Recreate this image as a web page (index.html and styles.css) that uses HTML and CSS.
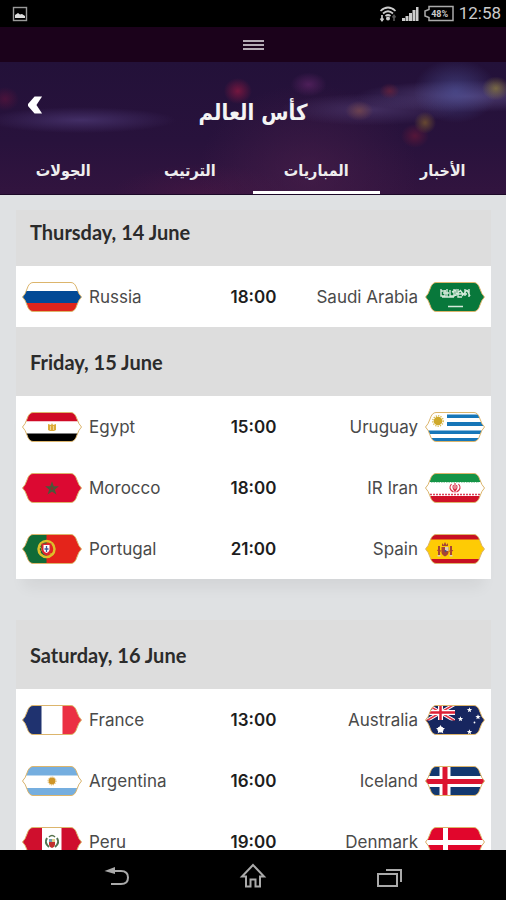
FILE: index.html
```html
<!DOCTYPE html>
<html lang="en">
<head>
  <meta charset="UTF-8" />
  <meta name="viewport" content="width=device-width, initial-scale=1.0"/>
  <title>كأس العالم</title>
  <link rel="stylesheet" href="styles.css">
</head>
<body>

<svg class="defs" aria-hidden="true">
  <defs>
    <path id="badge" d="M10 .5H48Q52 .5 54 7Q55.500 12 58.500 15Q55.500 18 54 23Q52 29.500 48 29.500H10Q6 29.500 4 23Q2.500 18-.5 15Q2.500 12 4 7Q6 .5 10 .5Z"/>
    <clipPath id="clip"><use href="#badge"/></clipPath>
    <path id="star" d="M0-4L1-1.3L3.8-1.2L1.5.6L2.4 3.3L0 1.7L-2.4 3.3L-1.5.6L-3.8-1.2L-1-1.3Z"/>
  </defs>
</svg>

<div class="phone">
  <div class="status">
    <svg class="picture" viewBox="0 0 16 16">
      <rect x="1.5" y="1.5" width="13" height="13" fill="none" stroke="#999" stroke-width="1.4"/>
      <path d="M3 12V9l3-2 2 1.500 2-.5 3 2v2z" fill="#ddd"/>
    </svg>
    <svg class="wifi" viewBox="0 0 18 18" fill="none" stroke="#ccc" stroke-width="1.7">
      <path d="M1.500 6Q9-1 16.500 6M4 8.500Q9 4 14 8.500M6.500 11Q9 9 11.500 11"/>
      <circle cx="9" cy="13.500" r="2" fill="#ccc" stroke="none"/>
      <path d="M3 10v5M1.500 13.500L3 15.500 4.500 13.500"/>
      <path d="M15 16v-5M13.500 12.500L15 10.500 16.500 12.500" stroke="#555"/>
    </svg>
    <svg class="signal" viewBox="0 0 18 18" fill="#ccc">
      <path d="M1 13h3v3H1zM4.500 11h3v5h-3zM8 8h3v8H8zM11.500 5h3v11h-3zM15 2h2.500v14H15z"/>
    </svg>
    <div class="battery">
      <svg viewBox="0 0 32 18" fill="none" stroke="#aaa" stroke-width="1.500"><path d="M6 1.500H30V15.500H6V12.500L2 11V6L6 4.500Z"/></svg>
      <span>48%</span>
    </div>
    <time class="clock">12:58</time>
  </div>

  <div class="menubar">
    <button class="menu" aria-label="Menu"><i></i><i></i><i></i></button>
  </div>

  <header class="hero">
    <div class="title">
      <button class="back" aria-label="Back">
        <svg viewBox="0 0 16 20"><path d="M7 1H15L9 10L15 19H7L0 11V9Z" fill="#fff"/></svg>
      </button>
      <h1 lang="ar" dir="rtl">كأس العالم</h1>
    </div>
    <nav class="tabs" lang="ar" dir="rtl">
      <a href="#">الأخبار</a>
      <a href="#" class="active">المباريات</a>
      <a href="#">الترتيب</a>
      <a href="#">الجولات</a>
    </nav>
  </header>

  <main>
    <section>
      <h2>Thursday, 14 June</h2>
      <ul class="card">
        <li>
          <div class="team">
            <svg class="flag" viewBox="0 0 58 30"><g clip-path="url(#clip)"><path fill="#fff" d="M0 0h58v9H0z"/><path fill="#034a96" d="M-1 9h60v12H-1z"/><path fill="#e0251b" d="M0 21h58v9H0z"/></g><use href="#badge" class="rim"/></svg>
            <span>Russia</span>
          </div>
          <time>18:00</time>
          <div class="team away">
            <span>Saudi Arabia</span>
            <svg class="flag" viewBox="0 0 58 30"><g clip-path="url(#clip)"><path fill="#08783b" d="M0 0h58v30H0z"/><g fill="none" stroke="#d5eadb" stroke-width="1.400"><path d="M15 7v7h4V8M17 11h6M21 7v8M24 8v6h4V7M26 10l4-2v6M32 7v8h4M34 8l3 4M39 7v7M41 8l3 6M43 7v8M16 15h12M31 12h10M15 9h5M28 14l6-5M36 14l5-6"/><path d="M22 24.500h15"/></g></g><use href="#badge" class="rim"/></svg>
          </div>
        </li>
      </ul>
    </section>

    <section>
      <h2>Friday, 15 June</h2>
      <ul class="card shadow">
        <li>
          <div class="team">
            <svg class="flag" viewBox="0 0 58 30"><g clip-path="url(#clip)"><path fill="#cf0a26" d="M0 0h58v9.500H0z"/><path fill="#fff" d="M0 9.500h58v12H0z"/><path fill="#000" d="M0 21.500h58V30H0z"/><path fill="#dcab38" d="M25 12l3 1 1-2 1 2 3-1v6l-2 1h-4l-2-1z"/><path stroke="#f4deb0" stroke-width=".8" d="M27.500 14v4M30.500 14v4"/></g><use href="#badge" class="rim"/></svg>
            <span>Egypt</span>
          </div>
          <time>15:00</time>
          <div class="team away">
            <span>Uruguay</span>
            <svg class="flag" viewBox="0 0 58 30"><g clip-path="url(#clip)"><path fill="#fff" d="M0 0h58v30H0z"/><path fill="#1676b8" d="M21 2.500h37V6H21zM21 10h37v4H21zM0 18.500h58v3.500H0zM0 26h58v3H0z"/><circle cx="12" cy="9" r="4.300" fill="#cfa92a"/><circle cx="12" cy="9" r="5.200" fill="none" stroke="#d8bb55" stroke-width="1.500" stroke-dasharray="1.200 1.200"/></g><use href="#badge" class="rim"/></svg>
          </div>
        </li>
        <li>
          <div class="team">
            <svg class="flag" viewBox="0 0 58 30"><g clip-path="url(#clip)"><path fill="#dc0932" d="M-1 0h60v30H-1z"/><use href="#star" fill="#8d2b2c" stroke="#47593a" stroke-width="1.400" transform="translate(29 15.500) scale(1.200)"/></g><use href="#badge" class="rim"/></svg>
            <span>Morocco</span>
          </div>
          <time>18:00</time>
          <div class="team away">
            <span>IR Iran</span>
            <svg class="flag" viewBox="0 0 58 30"><g clip-path="url(#clip)"><path fill="#fff" d="M0 0h58v30H0z"/><path fill="#159447" d="M0 0h58v9H0z"/><path fill="#d01027" d="M0 23h58v7H0z"/><path d="M5 9.500h48" stroke="#a9d8b9" stroke-dasharray="1.500 1"/><path d="M4 21.500h50" stroke="#dc4057" stroke-width="1.500" stroke-dasharray="2 1"/><path d="M25.500 11q-4 4.500 2 8M32.500 11q4 4.500-2 8M29 10v9.500M27.500 12q-1.500 3 1.500 6 3-3 1.500-6" fill="none" stroke="#d92b42" stroke-width="1.100"/></g><use href="#badge" class="rim"/></svg>
          </div>
        </li>
        <li>
          <div class="team">
            <svg class="flag" viewBox="0 0 58 30"><g clip-path="url(#clip)"><path fill="#e4241b" d="M0 0h59v30H0z"/><path fill="#106b37" d="M-1 0h24.500v30H-1z"/><circle cx="23.500" cy="15" r="8" fill="none" stroke="#dcc02b" stroke-width="2.500"/><path d="M16 12q7 9 15 8M16 19q8-11 15-8" fill="none" stroke="#dcc02b"/><path d="M18.500 9.500h10v7q-1 4-5 5-4-1-5-5z" fill="#dc2630"/><path d="M20.500 11h6v5q-1 3-3 3-2 0-3-3z" fill="#fff"/><path d="M23.500 12v6M21.500 15h4" stroke="#3b5996" stroke-width="1.300"/></g><use href="#badge" class="rim"/></svg>
            <span>Portugal</span>
          </div>
          <time>21:00</time>
          <div class="team away">
            <span>Spain</span>
            <svg class="flag" viewBox="0 0 58 30"><g clip-path="url(#clip)"><path fill="#fecb05" d="M0 0h58v30H0z"/><path fill="#c71022" d="M0 0h58v5.500H0zM0 25h58v5H0z"/><path fill="#a64535" d="M12 12h2v9h-2zM24 12h2v9h-2zM15.500 13h7v6q-1 3-3.500 3.500-2.500-.5-3.500-3.500zM16 9l1.500 2L19 8l1.500 3L22 9v3h-6z"/><path fill="#ddd0bb" d="M19 13h3.500v4H19zM11.500 21h3v1.500h-3zM23.500 21h3v1.500h-3z"/><circle cx="19.500" cy="17" r="1" fill="#3d518d"/><path d="M11 16q4 3 4 0M23 17q3 2 4-1" stroke="#b94835" fill="none"/></g><use href="#badge" class="rim"/></svg>
          </div>
        </li>
      </ul>
    </section>

    <section class="spaced">
      <h2>Saturday, 16 June</h2>
      <ul class="card">
        <li>
          <div class="team">
            <svg class="flag" viewBox="0 0 58 30"><g clip-path="url(#clip)"><path fill="#fff" d="M0 0h58v30H0z"/><path fill="#1f326f" d="M-1 0h19.500v30H-1z"/><path fill="#eb3043" d="M39.500 0H59v30H39.500z"/></g><use href="#badge" class="rim"/></svg>
            <span>France</span>
          </div>
          <time>13:00</time>
          <div class="team away">
            <span>Australia</span>
            <svg class="flag" viewBox="0 0 58 30"><g clip-path="url(#clip)"><path fill="#17265f" d="M0 0h58v30H0z"/><path d="M0-1L29 16M0 16L29-1" stroke="#fff" stroke-width="3.500"/><path d="M0-1L29 16M0 16L29-1" stroke="#e23445" stroke-width="1.500"/><path d="M14.500 0v15M0 7.500h29" stroke="#fff" stroke-width="5"/><path d="M14.500 0v15M0 7.500h29" stroke="#dd2036" stroke-width="2.500"/><path fill="#17265f" d="M0 15.500h31V30H0zM29 0h5v16h-5z"/><g fill="#fff"><use href="#star" transform="translate(14.500 24.500) scale(1.200)"/><circle cx="14.500" cy="24.500" r="3"/><use href="#star" transform="translate(43.500 5) scale(.7)"/><use href="#star" transform="translate(34.500 14) scale(.7)"/><use href="#star" transform="translate(52 12) scale(.7)"/><use href="#star" transform="translate(43.500 27) scale(.7)"/><circle cx="48.500" cy="17.500" r=".9"/></g></g><use href="#badge" class="rim"/></svg>
          </div>
        </li>
        <li>
          <div class="team">
            <svg class="flag" viewBox="0 0 58 30"><g clip-path="url(#clip)"><path fill="#75aedf" d="M0 0h58v30H0z"/><path fill="#fff" d="M0 9.500h58V22H0z"/><circle cx="29" cy="15" r="3.400" fill="#cf9528"/><circle cx="29" cy="15" r="4" fill="none" stroke="#dba947" stroke-dasharray="1 1"/></g><use href="#badge" class="rim"/></svg>
            <span>Argentina</span>
          </div>
          <time>16:00</time>
          <div class="team away">
            <span>Iceland</span>
            <svg class="flag" viewBox="0 0 58 30"><g clip-path="url(#clip)"><path fill="#13386f" d="M0 0h58v30H0z"/><path d="M19 0v30M0 15.500h58" stroke="#fff" stroke-width="11"/><path d="M19 0v30M-1 15.500h60" stroke="#dc1430" stroke-width="5"/></g><use href="#badge" class="rim"/></svg>
          </div>
        </li>
        <li>
          <div class="team">
            <svg class="flag" viewBox="0 0 58 30"><g clip-path="url(#clip)"><path fill="#cf0f2d" d="M-1 0h60v30H-1z"/><path fill="#fff" d="M19 0h19.500v30H19z"/><path d="M24 11q-3 5 2 9M34 11q3 5-2 9" fill="none" stroke="#507451" stroke-width="2"/><path fill="#c2302f" d="M26 15h6v3q-1 3-3 3-2 0-3-3z"/><path fill="#6c9db4" d="M26 12h3v3h-3z"/><path fill="#e2cf86" d="M29 12h3v3h-3z"/><path d="M26 10q3-3 6 0" fill="none" stroke="#56714b" stroke-width="1.500"/></g><use href="#badge" class="rim"/></svg>
            <span>Peru</span>
          </div>
          <time>19:00</time>
          <div class="team away">
            <span>Denmark</span>
            <svg class="flag" viewBox="0 0 58 30"><g clip-path="url(#clip)"><path fill="#e1062c" d="M0 0h58v30H0z"/><path d="M19.500 0v30M0 15.500h58" stroke="#fff" stroke-width="5"/></g><use href="#badge" class="rim"/></svg>
          </div>
        </li>
      </ul>
    </section>
  </main>

  <footer class="softkeys">
    <button aria-label="Go back"><svg viewBox="0 0 28 28"><path d="M7 9H18Q25 9 25 15.500T18 22H8" /><path d="M1.500 9L12 5V12Z" class="solid"/></svg></button>
    <button aria-label="Home"><svg viewBox="0 0 28 28"><path d="M14 3L3 14.500H7V24.500H11.500V17.500H16.500V24.500H21V14.500H25Z"/></svg></button>
    <button aria-label="Recent apps"><svg viewBox="0 0 28 28"><path d="M3 12H22V24H3ZM11 8H26V20"/></svg></button>
  </footer>
</div>

</body>
</html>
```

FILE: styles.css
```css
* {
  box-sizing: border-box;
}
body {
  margin: 0;
  background: #000;
  font-family: Inter, "Liberation Sans", sans-serif;
}
button {
  padding: 0;
  border: 0;
  background: transparent;
  cursor: pointer;
}
svg {
  display: block;
}
.defs {
  position: absolute;
  width: 0;
  height: 0;
}
.phone {
  height: 100vh;
  display: flex;
  flex-direction: column;
}

/* status bar */
.status {
  flex: none;
  height: 27px;
  padding: 0 5px 0 12px;
  display: flex;
  align-items: center;
  gap: 4px;
  background: #000;
  color: #ccc;
  font-family: Roboto, sans-serif;
}
.status .picture {
  width: 16px;
  height: 16px;
  margin-right: auto;
}
.wifi, .signal {
  width: 18px;
  height: 18px;
}
.battery {
  display: grid;
  place-items: center;
  width: 32px;
  height: 18px;
}
.battery > * {
  grid-area: 1 / 1;
}
.battery svg {
  width: 32px;
  height: 18px;
}
.battery span {
  padding-left: 2px;
  font-size: 9px;
  line-height: 18px;
  font-weight: 700;
}
.clock {
  font-size: 17px;
  line-height: 27px;
}

.menubar {
  flex: none;
  height: 35px;
  display: flex;
  justify-content: center;
  align-items: center;
  background: #1b021b;
}
.menu {
  display: flex;
  flex-direction: column;
  gap: 2px;
}
.menu i {
  width: 21px;
  height: 2px;
  background: #b5acb5;
}

/* header */
.hero {
  flex: none;
  height: 133px;
  display: flex;
  flex-direction: column;
  justify-content: space-between;
  color: #f4f4f4;
  background:
    radial-gradient(ellipse 14px 13px at 47% 22%, rgba(150, 25, 65, .7), transparent),
    radial-gradient(ellipse 14px 12px at 1% 28%, rgba(110, 20, 60, .5), transparent),
    radial-gradient(ellipse 18px 12px at 61% 17%, rgba(105, 40, 110, .6), transparent),
    radial-gradient(ellipse 10px 8px at 77% 22%, rgba(120, 35, 55, .6), transparent),
    radial-gradient(ellipse 14px 10px at 71% 37%, rgba(125, 75, 75, .7), transparent),
    radial-gradient(ellipse 11px 11px at 84% 46%, rgba(130, 95, 45, .7), transparent),
    radial-gradient(ellipse 14px 12px at 82% 56%, rgba(115, 25, 55, .6), transparent),
    radial-gradient(ellipse 14px 12px at 98% 20%, rgba(135, 120, 65, .8), transparent),
    radial-gradient(ellipse 95px 13px at 16% 44%, rgba(85, 65, 130, .6), transparent),
    radial-gradient(ellipse 42px 32px at 90% 22%, rgba(75, 80, 150, .65), transparent),
    radial-gradient(ellipse 110px 16px at 92% 26%, rgba(100, 85, 145, .65), transparent),
    radial-gradient(ellipse 90px 16px at 73% 36%, rgba(85, 65, 120, .6), transparent),
    radial-gradient(ellipse 110px 90px at 61% 85%, rgba(75, 32, 75, .6), transparent),
    radial-gradient(ellipse 90px 30px at 40% 100%, rgba(85, 25, 70, .4), transparent),
    linear-gradient(#231139, #28123c 60%, #32143f);
  border-bottom: 1px solid #1c0828;
}
.title {
  height: 85px;
  display: grid;
  grid-template-columns: 52px 1fr 52px;
  align-items: center;
}
.back {
  width: 52px;
  height: 85px;
  padding-left: 28px;
}
.back svg {
  width: 15px;
  height: 20px;
}
.title h1 {
  margin: 0;
  padding-top: 16px;
  text-align: center;
  font-family: "DejaVu Sans Condensed", "DejaVu Sans", sans-serif;
  font-size: 22px;
  line-height: 32px;
  font-weight: 700;
}
.tabs {
  display: grid;
  grid-template-columns: repeat(4, 1fr);
}
.tabs a {
  height: 46px;
  border-bottom: 3px solid transparent;
  text-align: center;
  text-decoration: none;
  color: #eee;
  font-family: "DejaVu Sans Condensed", "DejaVu Sans", sans-serif;
  font-size: 16px;
  line-height: 46px;
  font-weight: 700;
}
.tabs .active {
  border-bottom-color: #fff;
}

/* fixtures */
main {
  flex: 1;
  min-height: 0;
  overflow: hidden;
  padding: 15px 15px 0 16px;
  background: #dfe1e3;
}
h2 {
  margin: 0;
  padding: 23px 14px 22px;
  background: #ddd;
  color: #2b2b2b;
  font-family: Lato, sans-serif;
  font-size: 20px;
  line-height: 24px;
  font-weight: 700;
}
section:first-child h2 {
  padding-top: 10px;
}
.spaced {
  margin-top: 41px;
}
.card {
  list-style: none;
  margin: 0;
  padding: 0;
  background: #fff;
}
.shadow {
  box-shadow: 0 16px 14px -8px rgba(0, 0, 0, .06);
}
.card li {
  height: 61px;
  padding: 0 7px;
  display: grid;
  grid-template-columns: 1fr auto 1fr;
  align-items: center;
}
.team {
  display: flex;
  align-items: center;
  gap: 8px;
  color: #4a4a4a;
  font-size: 17px;
  line-height: 24px;
  white-space: nowrap;
}
.away {
  justify-content: flex-end;
}
.card time {
  color: #1d1d1d;
  font-size: 17px;
  line-height: 24px;
  font-weight: 600;
}
.flag {
  flex: none;
  width: 58px;
  height: 30px;
  overflow: visible;
}
.rim {
  fill: none;
  stroke: #dcb56c;
  stroke-width: 1;
}

.softkeys {
  flex: none;
  height: 50px;
  padding: 2px 49px 0;
  display: grid;
  grid-template-columns: repeat(3, 1fr);
  background: #000;
}
.softkeys button {
  display: grid;
  place-items: center;
}
.softkeys svg {
  width: 28px;
  height: 28px;
  fill: none;
  stroke: #aaa;
  stroke-width: 2;
}
.softkeys .solid {
  fill: #aaa;
  stroke: none;
}
```
